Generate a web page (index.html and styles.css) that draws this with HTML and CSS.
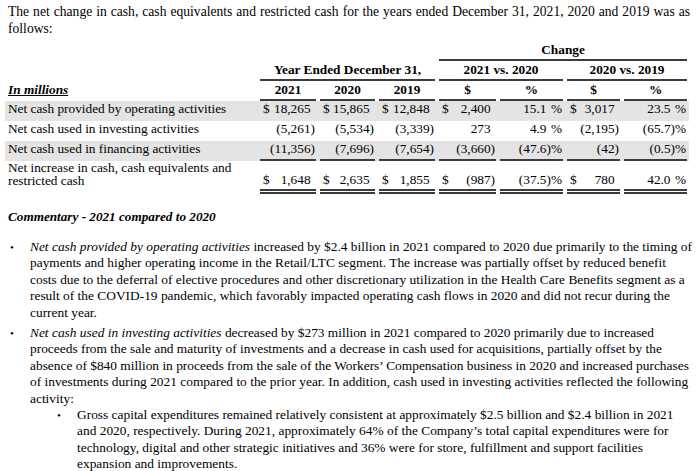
FILE: index.html
```html
<!DOCTYPE html>
<html>
<head>
<meta charset="utf-8">
<link rel="stylesheet" href="styles.css">
</head>
<body>
<div class="page">
  <p class="intro">The net change in cash, cash equivalents and restricted cash for the years ended December 31, 2021, 2020 and 2019 was as follows:</p>

  <table class="cf">
    <colgroup>
      <col class="c-lbl"><col class="c-y1"><col class="c-y2"><col class="c-y3"><col class="c-d1"><col class="c-p1"><col class="c-d2"><col class="c-p2">
    </colgroup>
    <tbody>
      <tr class="hrow">
        <td></td>
        <td colspan="3"></td>
        <td colspan="4"><div class="hc line">Change</div></td>
      </tr>
      <tr class="hrow">
        <td></td>
        <td colspan="3"><div class="hc line">Year Ended December 31,</div></td>
        <td colspan="2"><div class="hc line">2021 vs. 2020</div></td>
        <td colspan="2"><div class="hc line">2020 vs. 2019</div></td>
      </tr>
      <tr class="hrow">
        <td class="lbl"><span class="inm">In millions</span></td>
        <td><div class="hc line">2021</div></td>
        <td><div class="hc line">2020</div></td>
        <td><div class="hc line">2019</div></td>
        <td><div class="hc line">$</div></td>
        <td><div class="hc line">%</div></td>
        <td><div class="hc line">$</div></td>
        <td><div class="hc line">%</div></td>
      </tr>
      <tr class="shade">
        <td class="lbl">Net cash provided by operating activities</td>
        <td><div class="v d"><span>$</span><span>18,265<i class="p">)</i></span></div></td>
        <td><div class="v d"><span>$</span><span>15,865<i class="p">)</i></span></div></td>
        <td><div class="v d"><span>$</span><span>12,848<i class="p">)</i></span></div></td>
        <td><div class="v d"><span>$</span><span>2,400<i class="p">)</i></span></div></td>
        <td><div class="v"><span>15.1<i class="p">)</i>%</span></div></td>
        <td><div class="v d"><span>$</span><span>3,017<i class="p">)</i></span></div></td>
        <td><div class="v"><span>23.5<i class="p">)</i>%</span></div></td>
      </tr>
      <tr>
        <td class="lbl">Net cash used in investing activities</td>
        <td><div class="v"><span>(5,261)</span></div></td>
        <td><div class="v"><span>(5,534)</span></div></td>
        <td><div class="v"><span>(3,339)</span></div></td>
        <td><div class="v"><span>273<i class="p">)</i></span></div></td>
        <td><div class="v"><span>4.9<i class="p">)</i>%</span></div></td>
        <td><div class="v"><span>(2,195)</span></div></td>
        <td><div class="v"><span>(65.7)%</span></div></td>
      </tr>
      <tr class="shade">
        <td class="lbl">Net cash used in financing activities</td>
        <td><div class="v ul"><span>(11,356)</span></div></td>
        <td><div class="v ul"><span>(7,696)</span></div></td>
        <td><div class="v ul"><span>(7,654)</span></div></td>
        <td><div class="v ul"><span>(3,660)</span></div></td>
        <td><div class="v ul"><span>(47.6)%</span></div></td>
        <td><div class="v ul"><span>(42)</span></div></td>
        <td><div class="v ul"><span>(0.5)%</span></div></td>
      </tr>
      <tr class="total">
        <td class="lbl two">Net increase in cash, cash equivalents and restricted cash</td>
        <td><div class="v d dul"><span>$</span><span>1,648<i class="p">)</i></span></div></td>
        <td><div class="v d dul"><span>$</span><span>2,635<i class="p">)</i></span></div></td>
        <td><div class="v d dul"><span>$</span><span>1,855<i class="p">)</i></span></div></td>
        <td><div class="v d dul"><span>$</span><span>(987)</span></div></td>
        <td><div class="v dul"><span>(37.5)%</span></div></td>
        <td><div class="v d dul"><span>$</span><span>780<i class="p">)</i></span></div></td>
        <td><div class="v dul"><span>42.0<i class="p">)</i>%</span></div></td>
      </tr>
    </tbody>
  </table>

  <h3 class="comm">Commentary - 2021 compared to 2020</h3>

  <ul class="bl">
    <li class="bi"><span class="dot">•</span><div class="bt"><em>Net cash provided by operating activities</em> increased by $2.4 billion in 2021 compared to 2020 due primarily to the timing of<br>payments and higher operating income in the Retail/LTC segment. The increase was partially offset by reduced benefit<br>costs due to the deferral of elective procedures and other discretionary utilization in the Health Care Benefits segment as a<br>result of the COVID-19 pandemic, which favorably impacted operating cash flows in 2020 and did not recur during the<br>current year.</div></li>
    <li class="bi"><span class="dot">•</span><div class="bt"><em>Net cash used in investing activities</em> decreased by $273 million in 2021 compared to 2020 primarily due to increased<br>proceeds from the sale and maturity of investments and a decrease in cash used for acquisitions, partially offset by the<br>absence of $840 million in proceeds from the sale of the Workers’ Compensation business in 2020 and increased purchases<br>of investments during 2021 compared to the prior year. In addition, cash used in investing activities reflected the following<br>activity:
      <ul class="bl sub">
        <li class="bi"><span class="dot">•</span><div class="bt">Gross capital expenditures remained relatively consistent at approximately $2.5 billion and $2.4 billion in 2021<br>and 2020, respectively. During 2021, approximately 64% of the Company’s total capital expenditures were for<br>technology, digital and other strategic initiatives and 36% were for store, fulfillment and support facilities<br>expansion and improvements.</div></li>
      </ul>
    </div></li>
  </ul>
</div>
</body>
</html>
```

FILE: styles.css
```css
html, body {
  margin: 0;
  padding: 0;
  background: #ffffff;
}

body {
  font-family: "Liberation Serif", "Times New Roman", serif;
  font-size: 13.4px;
  line-height: 16.4px;
  color: #000000;
}

.page {
  padding: 3px 2px 0 8px;
}

.intro {
  margin: 0 4px 0 0;
  font-size: 13.6px;
  line-height: 17px;
  text-align: justify;
}

.cf {
  border-collapse: collapse;
  table-layout: fixed;
  width: 684px;
  margin: 4px 0 0 -3px;
  font-size: 13.3px;
}

.c-lbl { width: 253px; }
.c-y1 { width: 60px; }
.c-y2 { width: 59px; }
.c-y3 { width: 60px; }
.c-d1 { width: 61px; }
.c-p1 { width: 67px; }
.c-d2 { width: 57px; }
.c-p2 { width: 67px; }

.cf td {
  padding: 0 2px;
  vertical-align: bottom;
  white-space: nowrap;
}

.cf td.lbl {
  padding-left: 3px;
  padding-bottom: 4px;
  line-height: 16px;
}

.hrow td.lbl {
  padding-bottom: 3px;
  line-height: 17px;
}

.hc {
  font-weight: bold;
  text-align: center;
  line-height: 17px;
  padding-bottom: 1px;
}

.line {
  border-bottom: 2px solid #3c3c3c;
}

.inm {
  font-weight: bold;
  font-style: italic;
  text-decoration: underline;
}

.shade td {
  background: #e4e4e4;
}

.v {
  display: flex;
  justify-content: flex-end;
  line-height: 16px;
  padding: 0 1px 2px 3px;
  border-bottom: 2px solid transparent;
}

.v.d {
  justify-content: space-between;
}

.v.ul {
  border-bottom: 2px solid #3c3c3c;
}

.v .p {
  font-style: normal;
  visibility: hidden;
}

.total td {
  padding-top: 2px;
}

.total .v {
  padding-bottom: 0;
  line-height: 18px;
}

.total td.lbl.two {
  white-space: normal;
  line-height: 13px;
  padding-top: 0;
  padding-bottom: 7px;
}

.v.dul {
  border-bottom: 5px double #3c3c3c;
}

.comm {
  margin: 14px 0 0 0;
  font-size: 13.2px;
  font-weight: bold;
  font-style: italic;
  line-height: 17px;
}

.bl {
  list-style: none;
  margin: 0;
  padding: 0;
}

.bl > .bi {
  display: flex;
  margin-top: 4px;
}

.bl:not(.sub) {
  margin-top: 14px;
}

.dot {
  flex: 0 0 22px;
  font-size: 11px;
  padding-left: 2px;
  box-sizing: border-box;
}

.bt {
  flex: 1;
}

.bt em {
  font-style: italic;
}

.sub {
  margin-left: 25px;
}

.sub > .bi {
  margin-top: 0;
}
```
